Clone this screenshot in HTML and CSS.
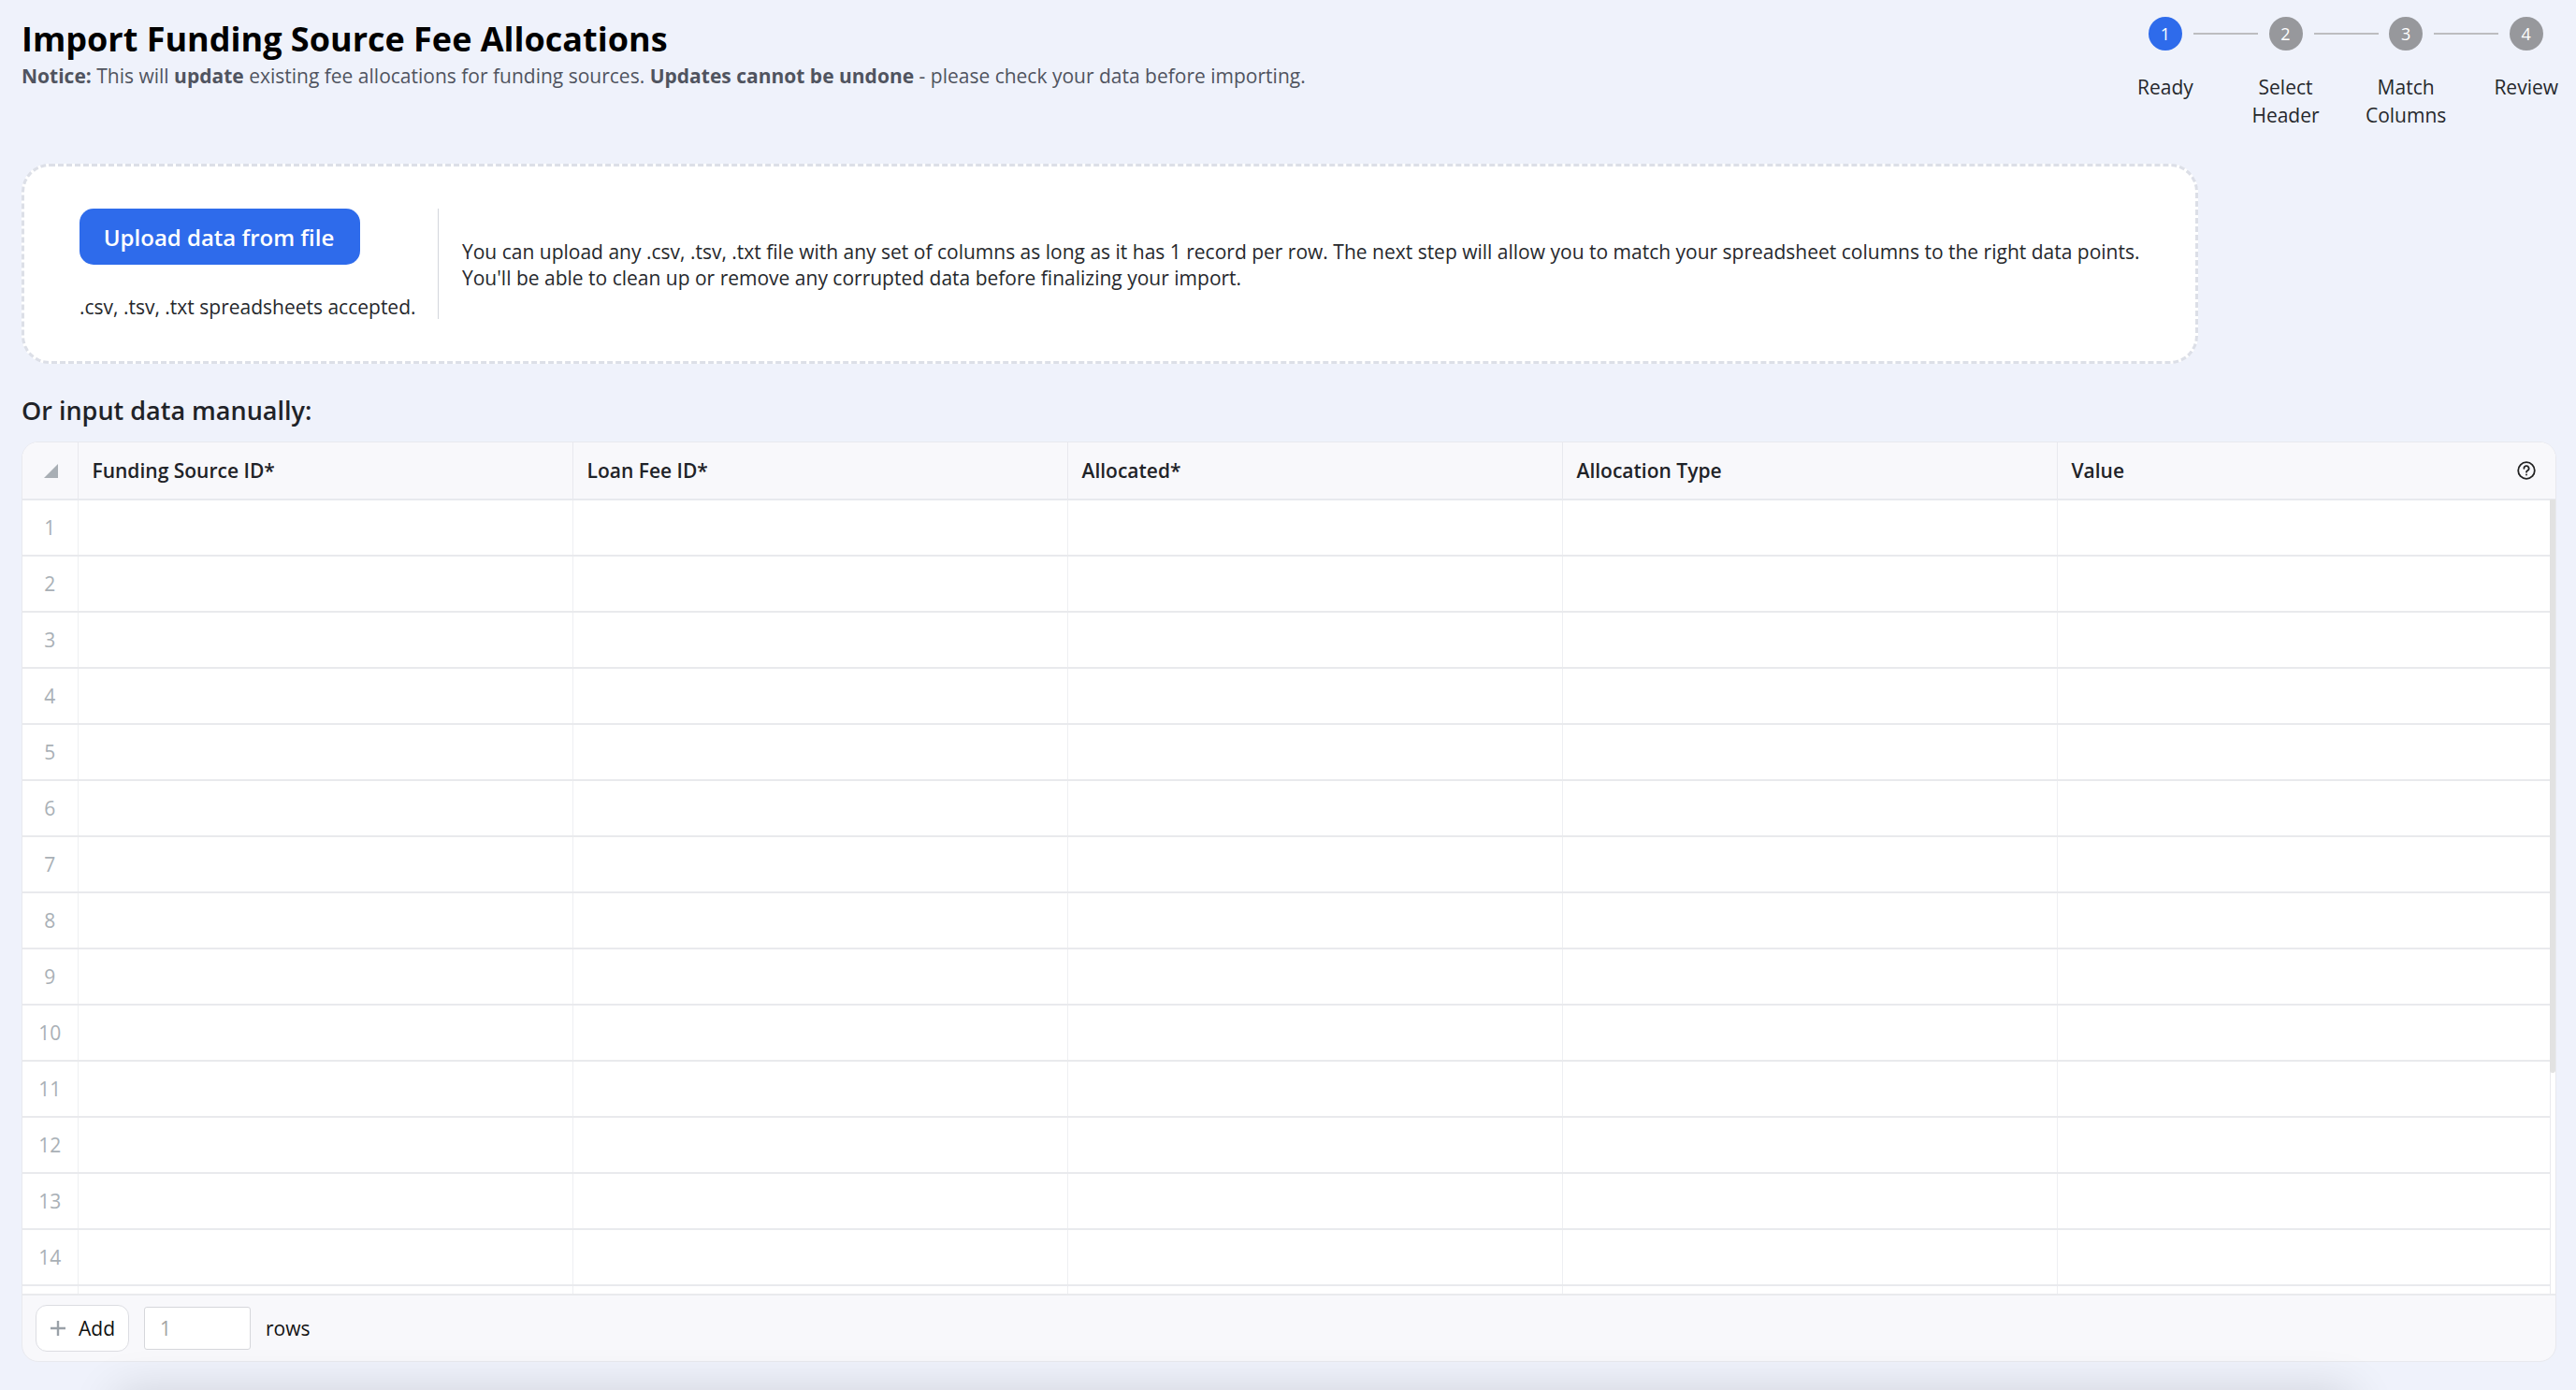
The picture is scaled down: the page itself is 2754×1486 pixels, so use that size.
FILE: index.html
```html
<!DOCTYPE html>
<html lang="en">
<head>
<meta charset="UTF-8">
<title>Import Funding Source Fee Allocations</title>
<link rel="stylesheet" href="styles.css">
</head>
<body>
<div class="page">
  <div class="top">
    <div class="heading">
      <h1>Import Funding Source Fee Allocations</h1>
      <p class="notice"><b>Notice:</b> This will <b>update</b> existing fee allocations for funding sources. <b>Updates cannot be undone</b> - please check your data before importing.</p>
    </div>
    <div class="steps">
      <div class="step active">
        <span class="dot">1</span>
        <span class="step-label">Ready</span>
      </div>
      <div class="step">
        <span class="dot">2</span>
        <span class="step-label">Select Header</span>
      </div>
      <div class="step">
        <span class="dot">3</span>
        <span class="step-label">Match Columns</span>
      </div>
      <div class="step">
        <span class="dot">4</span>
        <span class="step-label">Review</span>
      </div>
    </div>
  </div>

  <div class="upload-box">
    <div class="upload-left">
      <button class="upload-btn">Upload data from file</button>
      <div class="accepted">.csv, .tsv, .txt spreadsheets accepted.</div>
    </div>
    <div class="upload-help">
      You can upload any .csv, .tsv, .txt file with any set of columns as long as it has 1 record per row. The next step will allow you to match your spreadsheet columns to the right data points.<br>
      You'll be able to clean up or remove any corrupted data before finalizing your import.
    </div>
  </div>

  <h2>Or input data manually:</h2>

  <div class="sheet">
    <div class="sheet-body">
      <table>
        <colgroup>
          <col class="col-num"><col class="col-data"><col class="col-data"><col class="col-data"><col class="col-data"><col>
        </colgroup>
        <thead>
          <tr>
            <th class="corner"><span class="corner-mark"></span></th>
            <th>Funding Source ID*</th>
            <th>Loan Fee ID*</th>
            <th>Allocated*</th>
            <th>Allocation Type</th>
            <th>
              <div class="last-head">
                Value
                <svg class="help-icon" width="20" height="20" viewBox="0 0 20 20" fill="none" stroke="#222" stroke-width="1.8" stroke-linecap="round">
                  <circle cx="10" cy="10" r="8.8"/>
                  <path d="M7.4 7.8a2.6 2.6 0 1 1 3.9 2.2c-.9.5-1.3 1-1.3 1.7"/>
                  <path d="M10 14.4v.1"/>
                </svg>
              </div>
            </th>
          </tr>
        </thead>
        <tbody>
          <tr><td class="num">1</td><td></td><td></td><td></td><td></td><td></td></tr>
          <tr><td class="num">2</td><td></td><td></td><td></td><td></td><td></td></tr>
          <tr><td class="num">3</td><td></td><td></td><td></td><td></td><td></td></tr>
          <tr><td class="num">4</td><td></td><td></td><td></td><td></td><td></td></tr>
          <tr><td class="num">5</td><td></td><td></td><td></td><td></td><td></td></tr>
          <tr><td class="num">6</td><td></td><td></td><td></td><td></td><td></td></tr>
          <tr><td class="num">7</td><td></td><td></td><td></td><td></td><td></td></tr>
          <tr><td class="num">8</td><td></td><td></td><td></td><td></td><td></td></tr>
          <tr><td class="num">9</td><td></td><td></td><td></td><td></td><td></td></tr>
          <tr><td class="num">10</td><td></td><td></td><td></td><td></td><td></td></tr>
          <tr><td class="num">11</td><td></td><td></td><td></td><td></td><td></td></tr>
          <tr><td class="num">12</td><td></td><td></td><td></td><td></td><td></td></tr>
          <tr><td class="num">13</td><td></td><td></td><td></td><td></td><td></td></tr>
          <tr><td class="num">14</td><td></td><td></td><td></td><td></td><td></td></tr>
          <tr><td class="num"></td><td></td><td></td><td></td><td></td><td></td></tr>
        </tbody>
      </table>
      <div class="scroll-track"><div class="scroll-thumb"></div></div>
    </div>
    <div class="sheet-foot">
      <button class="add-btn">
        <svg width="16" height="16" viewBox="0 0 16 16" fill="none" stroke="#9aa1a8" stroke-width="2.4"><path d="M8 0v16M0 8h16"/></svg>
        Add
      </button>
      <input class="row-count" type="text" value="1">
      <span>rows</span>
    </div>
  </div>
</div>
<div class="bottom-shadow"></div>
</body>
</html>
```

FILE: styles.css
```css
* {
  box-sizing: border-box;
}

html, body {
  height: 100%;
}

body {
  margin: 0;
  overflow: hidden;
  background-color: #eff2fb;
  color: #1f2328;
  font-family: 'Open Sans', 'Noto Sans', sans-serif;
  font-size: 21px;
}

.page {
  padding: 0 21px 0 23px;
}

.top {
  display: flex;
  justify-content: space-between;
  height: 175px;
}

.heading {
  padding-top: 18px;
}

h1 {
  margin: 0;
  font-size: 36px;
  line-height: 48px;
  font-weight: 700;
  color: #000;
}

.notice {
  margin: 0;
  font-size: 21px;
  line-height: 30px;
  color: #50545f;
}

.notice b {
  font-weight: 700;
}

/* ステップ */
.steps {
  display: flex;
  padding-top: 18px;
  margin-right: -32px;
}

.step {
  position: relative;
  display: flex;
  flex-direction: column;
  align-items: center;
  width: 128.6px;
}

.step + .step::before {
  content: "";
  position: absolute;
  top: 17px;
  left: -34px;
  width: 69px;
  height: 2px;
  background-color: #bdbdc0;
}

.dot {
  width: 36px;
  height: 36px;
  border-radius: 50%;
  background-color: #97989c;
  color: #fff;
  font-size: 18px;
  line-height: 36px;
  text-align: center;
}

.step.active .dot {
  background-color: #2e6beb;
}

.step-label {
  width: 100px;
  margin-top: 24px;
  font-size: 21px;
  line-height: 30px;
  text-align: center;
  color: #26282c;
}

/* アップロード */
.upload-box {
  display: flex;
  align-items: stretch;
  width: 2327px;
  height: 214px;
  padding: 45px 20px 45px 59px;
  background-color: #fff;
  border: 3px dashed #dcdfe7;
  border-radius: 30px;
}

.upload-left {
  width: 384px;
  flex-shrink: 0;
  border-right: 1px solid #d3d6dc;
}

.upload-btn {
  display: block;
  width: 300px;
  height: 60px;
  padding: 0 2px 0 0;
  border: none;
  border-radius: 15px;
  background-color: #2e6beb;
  color: #fff;
  font-family: inherit;
  font-size: 24px;
  font-weight: 600;
}

.accepted {
  margin-top: 32px;
  font-size: 21px;
  line-height: 26px;
  color: #26282c;
}

.upload-help {
  margin-left: 25px;
  padding-top: 32px;
  font-size: 21px;
  line-height: 28px;
  color: #26282c;
}

h2 {
  margin: 0;
  height: 83px;
  padding-top: 30px;
  font-size: 27px;
  line-height: 40px;
  font-weight: 600;
  color: #1f2328;
}

/* シート */
.sheet {
  display: flex;
  flex-direction: column;
  height: 984px;
  border: 1px solid #e8e9ee;
  border-radius: 18px;
  overflow: hidden;
  background-color: #f8f8fb;
}

.sheet-body {
  position: relative;
  height: 910px;
  overflow: hidden;
  background-color: #fff;
}

table {
  width: 100%;
  border-collapse: collapse;
  table-layout: fixed;
}

.col-num {
  width: 59px;
}

.col-data {
  width: 529px;
}

th {
  height: 61px;
  padding: 0 0 0 15px;
  background-color: #f8f8fb;
  border-right: 1px solid #e8e9ee;
  border-bottom: 2px solid #e8e9ee;
  font-size: 21px;
  font-weight: 600;
  text-align: left;
  color: #1f2328;
}

th:last-child {
  border-right: none;
}

.corner {
  padding: 0;
}

.corner-mark {
  display: block;
  width: 0;
  height: 0;
  margin-left: 23px;
  border-left: 15px solid transparent;
  border-bottom: 15px solid #a8aeb4;
}

.last-head {
  display: flex;
  justify-content: space-between;
  align-items: center;
  padding-right: 21px;
}

td {
  height: 60px;
  border-right: 1px solid #eeeff2;
  border-bottom: 2px solid #e9eaed;
}

td:last-child {
  border-right: none;
}

.num {
  text-align: center;
  font-size: 21px;
  color: #a9b0b6;
}

.scroll-track {
  position: absolute;
  top: 61px;
  right: 0;
  bottom: 0;
  width: 6px;
  background-color: #fff;
  border-left: 1px solid #e9eaed;
}

.scroll-thumb {
  width: 6px;
  height: 613px;
  margin-left: -1px;
  border-radius: 0 0 3px 3px;
  background-color: #e2e2e2;
}

.sheet-foot {
  display: flex;
  align-items: center;
  flex: 1;
  gap: 16px;
  padding: 0 0 0 14px;
  border-top: 2px solid #e9eaed;
  font-size: 21px;
  color: #111;
}

.add-btn {
  display: flex;
  align-items: center;
  gap: 14px;
  width: 100px;
  height: 50px;
  padding: 0 0 0 15px;
  border: 1px solid #dcdde2;
  border-radius: 12px;
  background-color: #fff;
  color: #111;
  font-family: inherit;
  font-size: 21px;
}

.row-count {
  width: 114px;
  height: 46px;
  padding: 0 16px;
  border: 1px solid #d6d7db;
  border-radius: 3px;
  background-color: #fff;
  color: #a3a3a3;
  font-family: inherit;
  font-size: 21px;
}

/* 画面下の影 */
.bottom-shadow {
  position: fixed;
  left: 125px;
  right: 240px;
  bottom: -44px;
  height: 40px;
  box-shadow: 0 0 50px rgba(0,0,0,0.16);
}
```
